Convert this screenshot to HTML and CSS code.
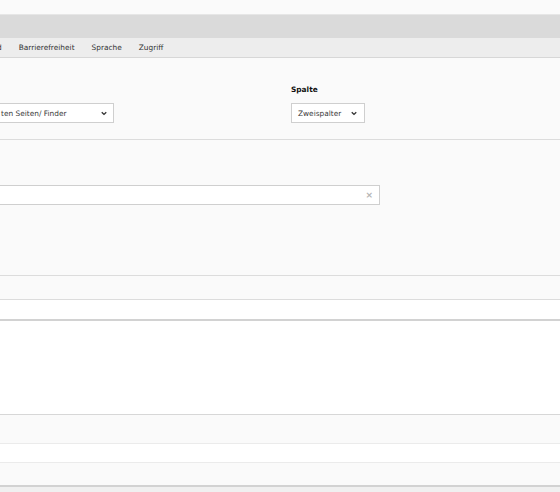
FILE: index.html
```html
<!DOCTYPE html>
<html lang="de">
<head>
<meta charset="utf-8">
<title>Formular</title>
<link rel="stylesheet" href="styles.css">
</head>
<body>
<div class="page">
  <div class="topbar"></div>
  <div class="band"></div>
  <nav class="tabs">
    <span class="tab tab-cut">d</span>
    <span class="tab">Barrierefreiheit</span>
    <span class="tab">Sprache</span>
    <span class="tab">Zugriff</span>
  </nav>
  <section class="fields">
    <div class="field field-wide">
      <div class="label">&nbsp;</div>
      <div class="select select-cut">
        <span>ten Seiten/ Finder</span>
        <svg class="chev" viewBox="0 0 8 6" width="6" height="5"><path d="M1 1.2 L4 4.2 L7 1.2" fill="none" stroke="#333" stroke-width="1.8"/></svg>
      </div>
    </div>
    <div class="field">
      <div class="label label-bold">Spalte</div>
      <div class="select select-small">
        <span>Zweispalter</span>
        <svg class="chev" viewBox="0 0 8 6" width="6" height="5"><path d="M1 1.2 L4 4.2 L7 1.2" fill="none" stroke="#333" stroke-width="1.8"/></svg>
      </div>
    </div>
  </section>
  <section class="panel-input">
    <div class="input">
      <span class="clear">×</span>
    </div>
  </section>
  <div class="row row-grey row-h23"></div>
  <div class="row row-white row-h19 row-double"></div>
  <div class="block"></div>
  <div class="row row-grey row-h28 row-light"></div>
  <div class="row row-white row-h18 row-light"></div>
  <div class="row row-grey row-h23 row-double"></div>
  <div class="foot"></div>
</div>
</body>
</html>
```
FILE: styles.css
```css
* { box-sizing: border-box; }
html, body { margin: 0; padding: 0; }
body {
  background: #f0f0f0;
  font-family: "DejaVu Sans", Verdana, sans-serif;
  font-size: 7.4px;
  color: #333;
  overflow: hidden;
}
.page { width: 560px; }
.topbar { height: 15px; background: #fafafa; border-bottom: 1px solid #e6e6e6; }
.band { height: 23px; background: #dadada; }
.tabs {
  display: flex;
  height: 20px;
  background: #ededed;
  border-bottom: 1px solid #d7d7d7;
  align-items: center;
}
.tab { padding: 0 8.5px; color: #333; line-height: 19px; }
.tab-cut { margin-left: -3px; padding-left: 0; }
.fields {
  display: flex;
  background: #fafafa;
  padding: 27px 0 16px 0;
  border-bottom: 1px solid #dcdcdc;
}
.field { display: flex; flex-direction: column; }
.field-wide { width: 291px; }
.label { height: 10px; line-height: 10px; margin-bottom: 8px; }
.label-bold { font-weight: bold; color: #111; }
.select {
  display: flex;
  align-items: center;
  justify-content: space-between;
  height: 20px;
  background: #fff;
  border: 1px solid #cfcfcf;
  color: #3a3a3a;
}
.select-cut { width: 124px; margin-left: -10px; padding: 0 6px 0 10px; }
.select-small { width: 74px; padding: 0 7px 0 6px; }
.chev { display: block; }
.panel-input {
  height: 136px;
  background: #fafafa;
  padding-top: 45px;
  border-bottom: 1px solid #dcdcdc;
}
.input {
  width: 390px;
  margin-left: -10px;
  height: 20px;
  background: #fff;
  border: 1px solid #cfcfcf;
  display: flex;
  justify-content: flex-end;
  align-items: center;
  padding-right: 6px;
}
.clear { color: #b5b5b5; font-size: 9px; line-height: 1; font-weight: bold; }
.row { border-bottom: 1px solid #dcdcdc; }
.row-grey { background: #fafafa; }
.row-white { background: #fff; }
.row-h23 { height: 24px; }
.row-h19 { height: 21px; }
.row-h28 { height: 29px; }
.row-h18 { height: 19px; }
.row-light { border-bottom-color: #ebebeb; }
.row-double { border-bottom: 2px solid #d2d2d2; }
.block { height: 94px; background: #fff; border-bottom: 1px solid #d7d7d7; }
.foot { height: 10px; background: #f0f0f0; }
```
